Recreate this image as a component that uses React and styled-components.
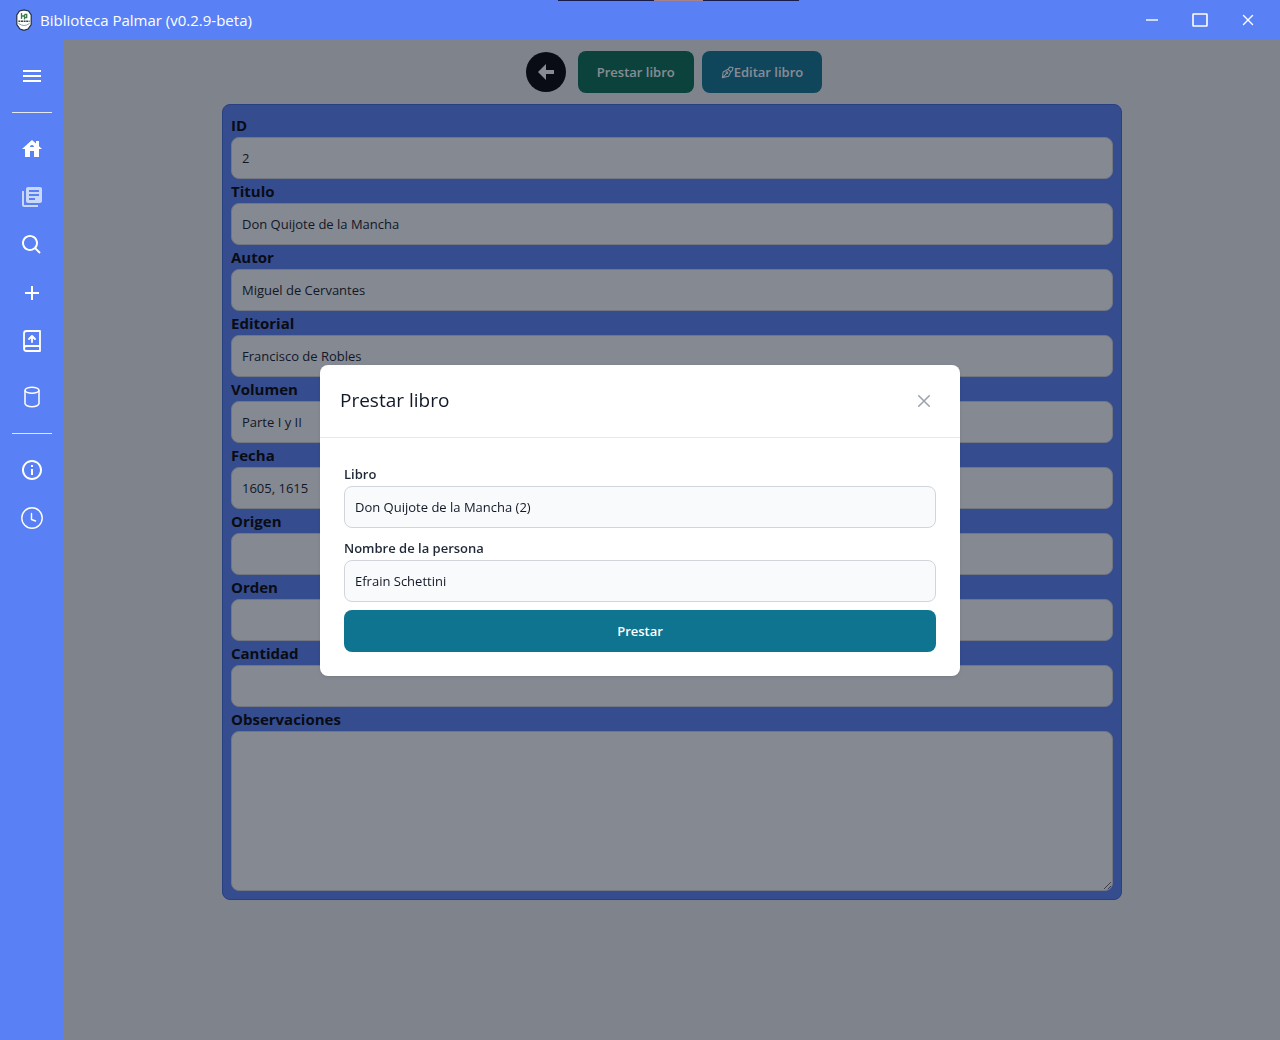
import React from "react";
import styled, { createGlobalStyle, css } from "styled-components";
import { MdMenu, MdHouse, MdLibraryBooks, MdInfoOutline } from "react-icons/md";
import { BiSearch, BiPlus } from "react-icons/bi";

const BLUE = "#5981f5";

const GlobalStyle = createGlobalStyle`
  *, *::before, *::after { box-sizing: border-box; }
  body {
    margin: 0;
    font-family: "Segoe UI", "Open Sans", "Noto Sans", sans-serif;
    font-size: 15px;
    line-height: 24px;
    background: #edeeef;
  }
  button, input, textarea { font: inherit; }
  button { cursor: pointer; }
`;

const Shell = styled.div`
  min-height: 100vh;
  display: flex;
  flex-direction: column;
`;

const TitleBar = styled.header`
  position: relative;
  z-index: 20;
  height: 40px;
  padding: 0 16px;
  display: flex;
  align-items: center;
  gap: 8px;
  background: ${BLUE};
  color: #fff;
`;

const AppTitle = styled.h1`
  margin: 0;
  flex: 1;
  font-size: 15px;
  font-weight: 400;
`;

const TopStrip = styled.div`
  position: absolute;
  top: 0;
  left: 50%;
  width: 241px;
  height: 1px;
  transform: translateX(-82px);
  background: linear-gradient(90deg, #171d4a 40%, #a5828c 40% 60%, #171d4a 60%);
`;

const WindowButtons = styled.div`
  display: flex;
  gap: 16px;
`;

const WindowButton = styled.button`
  width: 32px;
  height: 32px;
  padding: 0;
  border: 0;
  background: none;
  color: #fff;
  display: grid;
  place-items: center;
`;

const Body = styled.div`
  flex: 1;
  display: flex;
`;

const Sidebar = styled.nav`
  position: relative;
  z-index: 20;
  width: 64px;
  padding: 12px;
  display: flex;
  flex-direction: column;
  align-items: center;
  background: ${BLUE};
`;

const NavGroup = styled.div`
  display: flex;
  flex-direction: column;
  align-items: center;
`;

const NavButton = styled.button`
  width: 48px;
  height: ${(p) => (p.$tall ? "64px" : "48px")};
  padding: 0;
  border: 0;
  background: none;
  color: ${(p) => (p.$active ? "#c9d7f9" : "#fff")};
  display: grid;
  place-items: center;
`;

const Divider = styled.hr`
  width: 40px;
  height: 1px;
  margin: ${(p) => (p.$wide ? "12px 0" : "4px 0 12px")};
  border: 0;
  flex: none;
  background: #e5e7eb;
`;

const Main = styled.main`
  flex: 1;
  min-width: 0;
  padding: 0 8px;
`;

const Toolbar = styled.div`
  min-height: 64px;
  display: flex;
  align-items: center;
  justify-content: center;
  gap: 8px;
`;

const BackButton = styled.button`
  width: 40px;
  height: 40px;
  margin: 0 4px;
  padding: 0;
  border: 0;
  border-radius: 50%;
  background: #000;
  color: #fff;
  display: grid;
  place-items: center;
`;

const buttonTones = { green: "#046c4e", cyan: "#0e7490" };

const Button = styled.button`
  height: 42px;
  padding: 0 19px;
  border: 0;
  border-radius: 8px;
  background: ${(p) => buttonTones[p.$tone]};
  color: #fff;
  font-size: 13px;
  font-weight: 600;
  line-height: 20px;
  display: flex;
  align-items: center;
  justify-content: center;
`;

const Card = styled.form`
  max-width: 900px;
  margin: 0 auto;
  padding: 8px;
  border: 1px solid #3f66d8;
  border-radius: 8px;
  background: ${BLUE};
`;

const fieldBox = css`
  display: block;
  width: 100%;
  padding: 10px;
  border: 1px solid #d1d5db;
  border-radius: 8px;
  background: #f9fafb;
  color: #111827;
  font-size: 13px;
  line-height: 20px;
`;

const Label = styled.label`
  display: block;
  font-size: 15px;
  font-weight: 700;
  line-height: 24px;
  color: #000;
`;

const Input = styled.input`
  ${fieldBox}
  height: 42px;
`;

const TextArea = styled.textarea`
  ${fieldBox}
  height: 160px;
`;

const Overlay = styled.div`
  position: fixed;
  inset: 0;
  z-index: 10;
  padding: 16px;
  display: flex;
  align-items: center;
  justify-content: center;
  background: rgba(17, 24, 39, 0.5);
`;

const Dialog = styled.section`
  width: 100%;
  max-width: 640px;
  border-radius: 8px;
  background: #fff;
  box-shadow: 0 1px 3px rgba(0, 0, 0, 0.1);
`;

const DialogHeader = styled.header`
  padding: 20px;
  display: flex;
  align-items: flex-start;
  justify-content: space-between;
  border-bottom: 1px solid #e5e7eb;
`;

const DialogTitle = styled.h2`
  margin: 0;
  color: #111827;
  font-size: 19px;
  font-weight: 500;
  line-height: 30px;
`;

const CloseButton = styled.button`
  width: 32px;
  height: 32px;
  padding: 0;
  border: 0;
  border-radius: 8px;
  background: none;
  color: #9ca3af;
  display: grid;
  place-items: center;
`;

const DialogForm = styled.form`
  padding: 24px;
  display: flex;
  flex-direction: column;
  gap: 8px;
`;

const DialogLabel = styled(Label)`
  color: #1f2937;
  font-size: 13px;
  font-weight: 600;
`;

const Crest = () => (
  <svg width="16" height="22" viewBox="0 0 16 22" aria-hidden="true">
    <path d="M8 .8 12.5 2 15.2 6v9.5L12 20l-4 1.3L4 20 .8 15.5V6L3.5 2Z" fill="#fff" stroke="#24303c" strokeWidth="1.2" />
    <path d="M5.5 4v6M5.5 7h3M8.5 5.5v5M8.5 5.5h2.2v3H8.5" fill="none" stroke="#3e7a50" strokeWidth="1.3" />
    <path d="M2.4 12.2h11.2" stroke="#39424b" strokeWidth="1.6" strokeDasharray="2 .6" />
    <path d="M2.5 14.5Q8 18.5 13.5 14.5" fill="none" stroke="#8d9ba6" />
  </svg>
);

const BookUpIcon = () => (
  <svg width="24" height="24" viewBox="0 0 24 24" fill="none" stroke="currentColor" strokeWidth="1.8" strokeLinecap="round" strokeLinejoin="round">
    <path d="M4 19.5v-15A2.5 2.5 0 0 1 6.5 2H20v20H6.5a2.5 2.5 0 0 1 0-5H20" />
    <path d="m9 10 3-3 3 3M12 13V7" />
  </svg>
);

const CylinderIcon = () => (
  <svg width="24" height="24" viewBox="0 0 24 24" fill="none" stroke="currentColor" strokeWidth="1.5">
    <ellipse cx="12" cy="5.3" rx="7" ry="3" />
    <path d="M5 5.3v13.2c0 1.7 3.1 3.2 7 3.2s7-1.5 7-3.2V5.3" />
  </svg>
);

const ClockIcon = () => (
  <svg width="24" height="24" viewBox="0 0 24 24" fill="none" stroke="currentColor" strokeWidth="1.4" strokeLinecap="round" strokeLinejoin="round">
    <circle cx="12" cy="12" r="10.2" />
    <path d="M11.5 7.5v6l4 1.5" />
  </svg>
);

const PenIcon = () => (
  <svg width="13" height="13" viewBox="0 0 24 24" fill="none" stroke="currentColor" strokeWidth="2" strokeLinejoin="round">
    <path d="M2.5 21.5 4 11l9-5 5 5-4 8Z M2.5 21.5l7-7M13 6l3-4 6 1-1 5-3 3" />
    <circle cx="11" cy="12.5" r="1.6" />
  </svg>
);

const ArrowIcon = () => (
  <svg width="16" height="16" viewBox="0 0 16 16" fill="currentColor">
    <path d="M0 8 8 0v6h8v4H8v6Z" />
  </svg>
);

const CrossIcon = ({ size, weight }) => (
  <svg width={size} height={size} viewBox="0 0 12 12" fill="none" stroke="currentColor" strokeWidth={weight} strokeLinecap="round">
    <path d="m1.5 1.5 9 9M10.5 1.5l-9 9" />
  </svg>
);

const bookFields = [
  { id: "id", label: "ID", value: "2" },
  { id: "titulo", label: "Titulo", value: "Don Quijote de la Mancha" },
  { id: "autor", label: "Autor", value: "Miguel de Cervantes" },
  { id: "editorial", label: "Editorial", value: "Francisco de Robles" },
  { id: "volumen", label: "Volumen", value: "Parte I y II" },
  { id: "fecha", label: "Fecha", value: "1605, 1615" },
  { id: "origen", label: "Origen", value: "" },
  { id: "orden", label: "Orden", value: "" },
  { id: "cantidad", label: "Cantidad", value: "" },
];

export default function App() {
  return (
    <Shell>
      <GlobalStyle />
      <TitleBar>
        <TopStrip />
        <Crest />
        <AppTitle>Biblioteca Palmar (v0.2.9-beta)</AppTitle>
        <WindowButtons>
          <WindowButton aria-label="Minimizar">
            <svg width="12" height="2" viewBox="0 0 12 2"><path d="M0 1h12" stroke="currentColor" strokeWidth="1.4" /></svg>
          </WindowButton>
          <WindowButton aria-label="Maximizar">
            <svg width="16" height="14" viewBox="0 0 16 14"><rect x="1" y="1" width="14" height="12" rx=".6" fill="none" stroke="currentColor" strokeWidth="1.6" /></svg>
          </WindowButton>
          <WindowButton aria-label="Cerrar">
            <CrossIcon size={12} weight={1.4} />
          </WindowButton>
        </WindowButtons>
      </TitleBar>

      <Body>
        <Sidebar>
          <NavButton aria-label="Menú"><MdMenu size={24} /></NavButton>
          <Divider $wide />
          <NavGroup>
            <NavButton aria-label="Inicio"><MdHouse size={24} /></NavButton>
            <NavButton aria-label="Libros" $active><MdLibraryBooks size={24} /></NavButton>
            <NavButton aria-label="Buscar"><BiSearch size={24} /></NavButton>
            <NavButton aria-label="Agregar"><BiPlus size={24} /></NavButton>
            <NavButton aria-label="Préstamos"><BookUpIcon /></NavButton>
            <NavButton aria-label="Base de datos" $tall><CylinderIcon /></NavButton>
          </NavGroup>
          <Divider />
          <NavGroup>
            <NavButton aria-label="Información"><MdInfoOutline size={24} /></NavButton>
            <NavButton aria-label="Historial"><ClockIcon /></NavButton>
          </NavGroup>
        </Sidebar>

        <Main>
          <Toolbar>
            <BackButton aria-label="Volver"><ArrowIcon /></BackButton>
            <Button type="button" $tone="green">Prestar libro</Button>
            <Button type="button" $tone="cyan"><PenIcon />Editar libro</Button>
          </Toolbar>
          <Card>
            {bookFields.map((f) => (
              <div key={f.id}>
                <Label htmlFor={f.id}>{f.label}</Label>
                <Input id={f.id} defaultValue={f.value} readOnly />
              </div>
            ))}
            <Label htmlFor="observaciones">Observaciones</Label>
            <TextArea id="observaciones" readOnly />
          </Card>
        </Main>
      </Body>

      <Overlay>
        <Dialog role="dialog" aria-modal="true" aria-labelledby="dialog-title">
          <DialogHeader>
            <DialogTitle id="dialog-title">Prestar libro</DialogTitle>
            <CloseButton aria-label="Cerrar"><CrossIcon size={14} weight={1.4} /></CloseButton>
          </DialogHeader>
          <DialogForm>
            <div>
              <DialogLabel htmlFor="libro">Libro</DialogLabel>
              <Input id="libro" defaultValue="Don Quijote de la Mancha (2)" readOnly />
            </div>
            <div>
              <DialogLabel htmlFor="persona">Nombre de la persona</DialogLabel>
              <Input id="persona" defaultValue="Efrain Schettini" />
            </div>
            <Button type="button" $tone="cyan">Prestar</Button>
          </DialogForm>
        </Dialog>
      </Overlay>
    </Shell>
  );
}
